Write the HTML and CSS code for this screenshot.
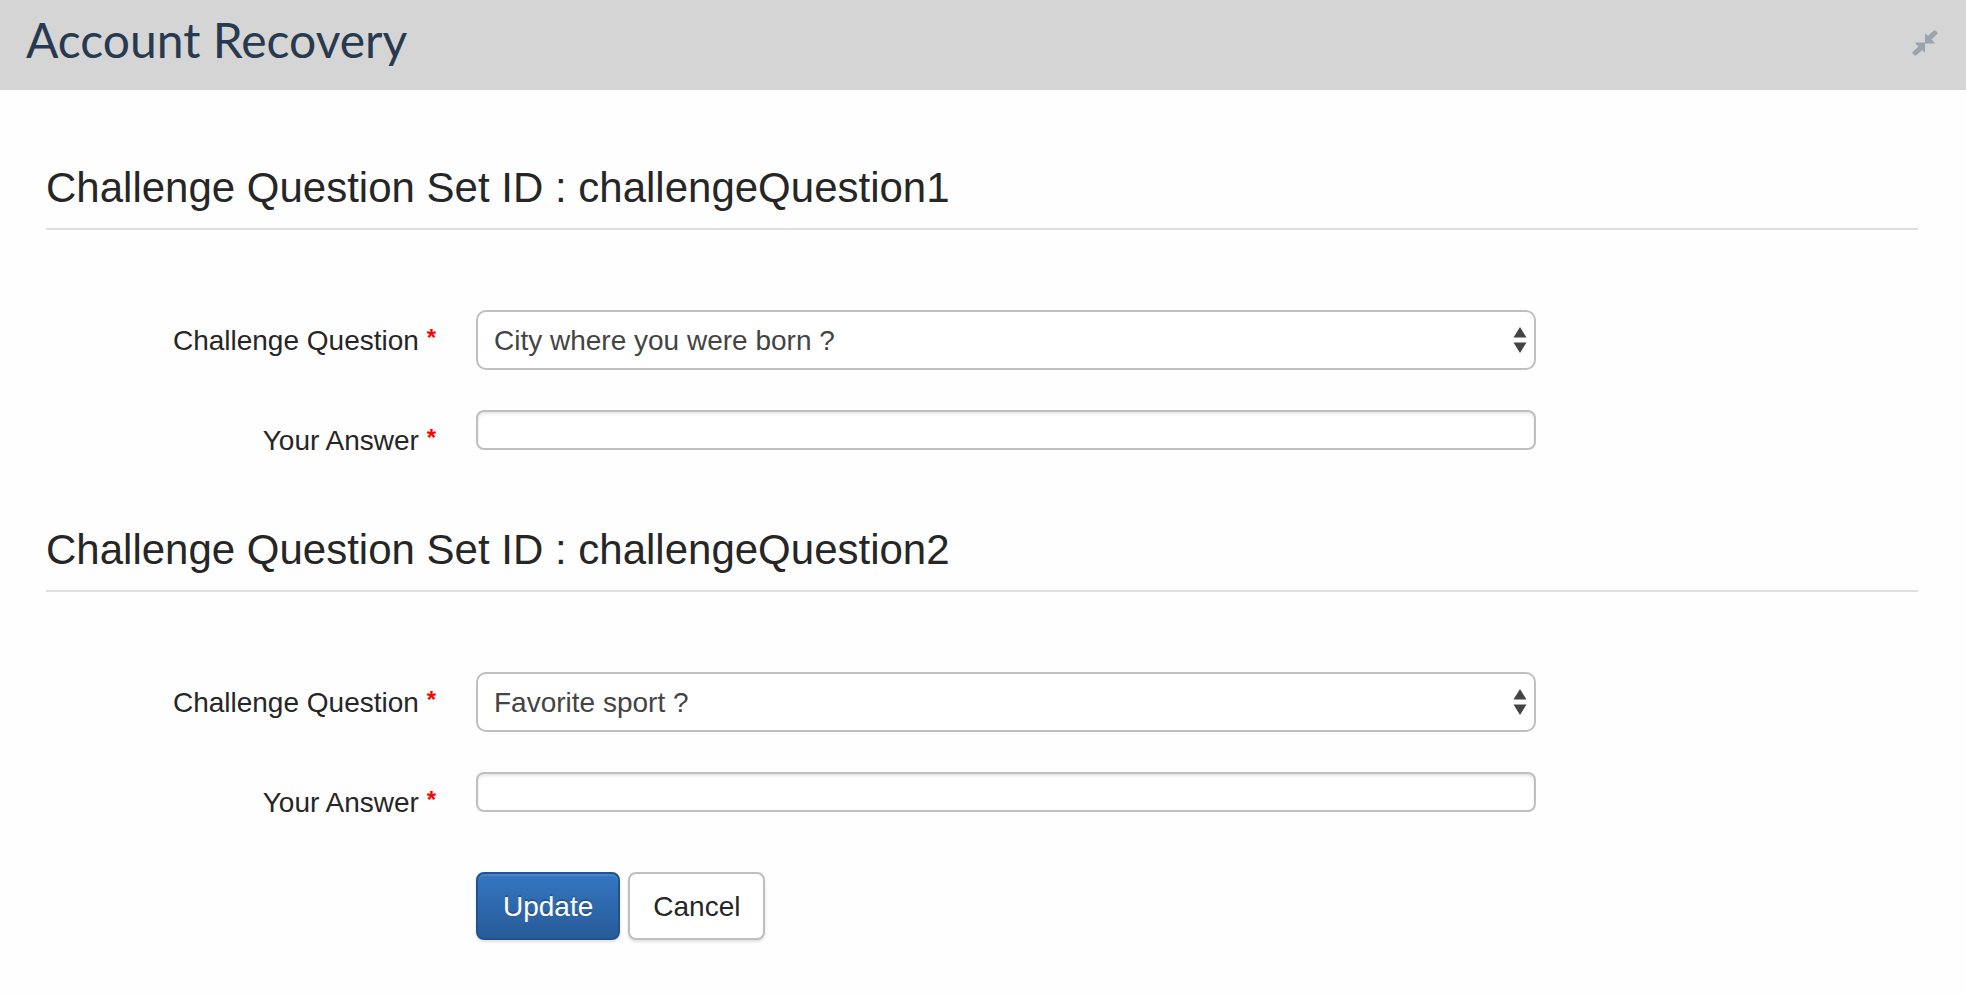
FILE: index.html
```html
<!DOCTYPE html>
<html lang="en">
<head>
<meta charset="utf-8">
<title>Account Recovery</title>
<link rel="stylesheet" href="styles.css">
</head>
<body>
<header class="panel-header">
  <h1 class="panel-title">Account Recovery</h1>
  <button class="collapse" type="button" aria-label="Collapse">
    <svg class="collapse-icon" viewBox="0 0 26 26" aria-hidden="true"><path d="M13 3.500 L16 5.800 L21.700 .7 Q22.700 0 23.700 .7 L25.200 2.200 Q26 3.200 25.200 4.200 L19.500 9.500 L22.500 12.500 V13.500 H13 Z"/><path d="M13 22.500 L10 20.200 L4.300 25.300 Q3.300 26 2.300 25.300 L.8 23.800 Q0 22.800 .8 21.800 L6.500 16.500 L3.500 13.500 V12.500 H13 Z"/></svg>
  </button>
</header>
<form class="recovery">
  <section class="question-set">
    <h2 class="set-title">Challenge Question Set ID : challengeQuestion1</h2>
    <div class="row">
      <label class="label" for="question1">Challenge Question <span class="required">*</span></label>
      <div class="field">
        <select class="select" id="question1"><option>City where you were born ?</option></select>
        <svg class="arrows" viewBox="0 0 14 26" aria-hidden="true"><path d="M7 0 L13.500 10.500 H.5 Z M7 26 L13.500 15.500 H.5 Z"/></svg>
      </div>
    </div>
    <div class="row">
      <label class="label" for="answer1">Your Answer <span class="required">*</span></label>
      <div class="field"><input class="input" id="answer1" type="text"></div>
    </div>
  </section>
  <section class="question-set">
    <h2 class="set-title">Challenge Question Set ID : challengeQuestion2</h2>
    <div class="row">
      <label class="label" for="question2">Challenge Question <span class="required">*</span></label>
      <div class="field">
        <select class="select" id="question2"><option>Favorite sport ?</option></select>
        <svg class="arrows" viewBox="0 0 14 26" aria-hidden="true"><path d="M7 0 L13.500 10.500 H.5 Z M7 26 L13.500 15.500 H.5 Z"/></svg>
      </div>
    </div>
    <div class="row">
      <label class="label" for="answer2">Your Answer <span class="required">*</span></label>
      <div class="field"><input class="input" id="answer2" type="text"></div>
    </div>
  </section>
  <div class="actions">
    <button class="button primary" type="submit">Update</button>
    <button class="button" type="button">Cancel</button>
  </div>
</form>
</body>
</html>
```
FILE: styles.css
```css
* { box-sizing: border-box; }
body {
  margin: 0;
  background: #fefefe;
  color: #262626;
  font: 28px/40px "Liberation Sans", Arial, sans-serif;
}
.panel-header {
  display: flex;
  justify-content: space-between;
  align-items: flex-start;
  padding: 10px 28px 20px 26px;
  background: #d5d5d5;
}
.panel-title {
  margin: 0;
  color: #273a4f;
  font: 400 48px/60px Lato, sans-serif;
}
.collapse {
  margin-top: 20px;
  padding: 0;
  border: 0;
  background: none;
  cursor: pointer;
}
.collapse-icon {
  display: block;
  width: 26px;
  height: 26px;
  fill: #9aa4ae;
}
.recovery {
  display: flex;
  flex-direction: column;
  gap: 50px;
  padding: 58px 48px 50px 46px;
}
.question-set {
  display: flex;
  flex-direction: column;
  gap: 40px;
}
.set-title {
  margin: 0 0 40px;
  border-bottom: 2px solid #dedede;
  font-size: 42px;
  font-weight: 400;
  line-height: 80px;
}
.row {
  display: flex;
  align-items: flex-start;
  gap: 40px;
}
.label {
  flex: 0 0 390px;
  padding-top: 10px;
  line-height: 42px;
  margin-bottom: -2px;
  text-align: right;
}
.required {
  color: #f00;
  font-size: 24px;
  font-weight: 700;
  line-height: 24px;
  vertical-align: 4px;
}
.field {
  position: relative;
  flex: 0 1 1060px;
  min-width: 0;
}
.select, .input {
  display: block;
  width: 100%;
  border: 2px solid #bfbfbf;
  background: #fff;
  color: #444;
  font: inherit;
}
.select {
  height: 60px;
  padding: 2px 40px 0 16px;
  border-radius: 10px;
  appearance: none;
}
.input {
  height: 40px;
  padding: 0 16px;
  border-radius: 8px;
  box-shadow: inset 0 2px 3px rgba(0, 0, 0, .1);
}
.arrows {
  position: absolute;
  top: 17px;
  right: 9px;
  width: 14px;
  height: 26px;
  fill: #444;
  pointer-events: none;
}
.actions {
  display: flex;
  gap: 8px;
  padding-left: 430px;
}
.button {
  height: 68px;
  padding: 2px 23px 0;
  border: 2px solid #bfbfbf;
  border-radius: 8px;
  background: #fff;
  box-shadow: 0 2px 3px rgba(0, 0, 0, .12);
  color: #262626;
  font: inherit;
}
.primary {
  padding: 2px 25px 0;
  border-color: #21528f;
  background: linear-gradient(#3476c2, #285b98);
  box-shadow: inset 0 2px 0 rgba(255, 255, 255, .12), 0 2px 3px rgba(0, 0, 0, .12);
  color: #fff;
  text-shadow: 0 -2px 0 rgba(0, 0, 0, .2);
}
```
